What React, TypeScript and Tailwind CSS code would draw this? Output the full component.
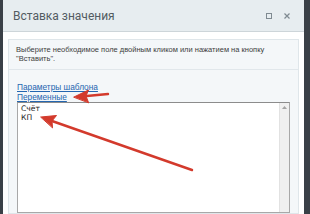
export default function App() {
  return (
    <div className="relative w-[310px] h-[214px] overflow-hidden bg-[#3a4047] pl-[3px] pr-[6px] flex" style={{ fontFamily: "Roboto, 'Liberation Sans', sans-serif" }}>
      <div className="flex flex-1 flex-col bg-white">
        {/* header */}
        <div className="flex h-[32px] shrink-0 items-center border-b border-[#cdd5d9] bg-[#e7edf0] pl-[10px] pr-[14px]">
          <span className="flex-1 text-[12px] leading-none text-[#535c62]">Вставка значения</span>
          <span className="mr-[12px] h-[6px] w-[6px] border border-[#7f8a91]" />
          <svg width="6" height="6" viewBox="0 0 6 6" className="text-[#7f8a91]">
            <path d="M0.5 0.5 L5.5 5.5 M5.5 0.5 L0.5 5.5" stroke="currentColor" strokeWidth="1.2" />
          </svg>
        </div>

        {/* body */}
        <div className="flex flex-1 flex-col px-[5px] pt-[7px]">
          <div className="flex flex-1 flex-col border border-[#dfe6ea] bg-[#f4f7f9]" style={{ fontFamily: "'Liberation Sans', Arial, sans-serif" }}>
            <div className="border-b border-[#e1e7eb] px-[7px] pt-[5px] pb-[6px] text-[7.5px] leading-[9px] text-[#3d3d3d]">
              Выберите необходимое поле двойным кликом или нажатием на кнопку
              <br />
              "Вставить".
            </div>

            <div className="flex flex-1 flex-col pl-[8px] pr-[8px] pt-[13px]">
              <a className="text-[8.3px] leading-[9.5px] text-[#2466b0] underline">Параметры шаблона</a>
              <a className="text-[8.3px] leading-[9.5px] text-[#2466b0] underline">Переменные</a>
              <div className="flex flex-1 border border-[#a8a8a8] border-t-[#8c8c8c] bg-white" style={{ fontFamily: "'DejaVu Sans', Verdana, sans-serif" }}>
                <div className="flex-1 pl-[3px] pt-[1px] text-[7.6px] leading-[9px] text-[#222]">
                  <div>Счёт</div>
                  <div>КП</div>
                </div>
                <div className="flex w-[10px] justify-center border-l border-[#e2e2e2] bg-[#f0f0f0] pt-[3px]">
                  <svg width="5" height="3" viewBox="0 0 5 3">
                    <path d="M0 3 L2.5 0 L5 3 Z" fill="#a3a3a3" />
                  </svg>
                </div>
              </div>
            </div>
          </div>
        </div>
      </div>

      {/* annotation arrows */}
      <svg className="pointer-events-none absolute left-0 top-0" width="310" height="214" viewBox="0 0 310 214">
        <g fill="#d33a2c" stroke="#d33a2c" strokeLinecap="round" strokeLinejoin="round">
          <line x1="108" y1="94" x2="84" y2="96.2" strokeWidth="2.4" />
          <path d="M74 97 L88.5 90 L86 96 L88.5 102.5 Z" strokeWidth="1" />
          <line x1="192" y1="170" x2="52" y2="121" strokeWidth="2.4" />
          <path d="M41 117 L56.5 115.5 L52 121 L52.5 127.5 Z" strokeWidth="1" />
        </g>
      </svg>
    </div>
  );
}
